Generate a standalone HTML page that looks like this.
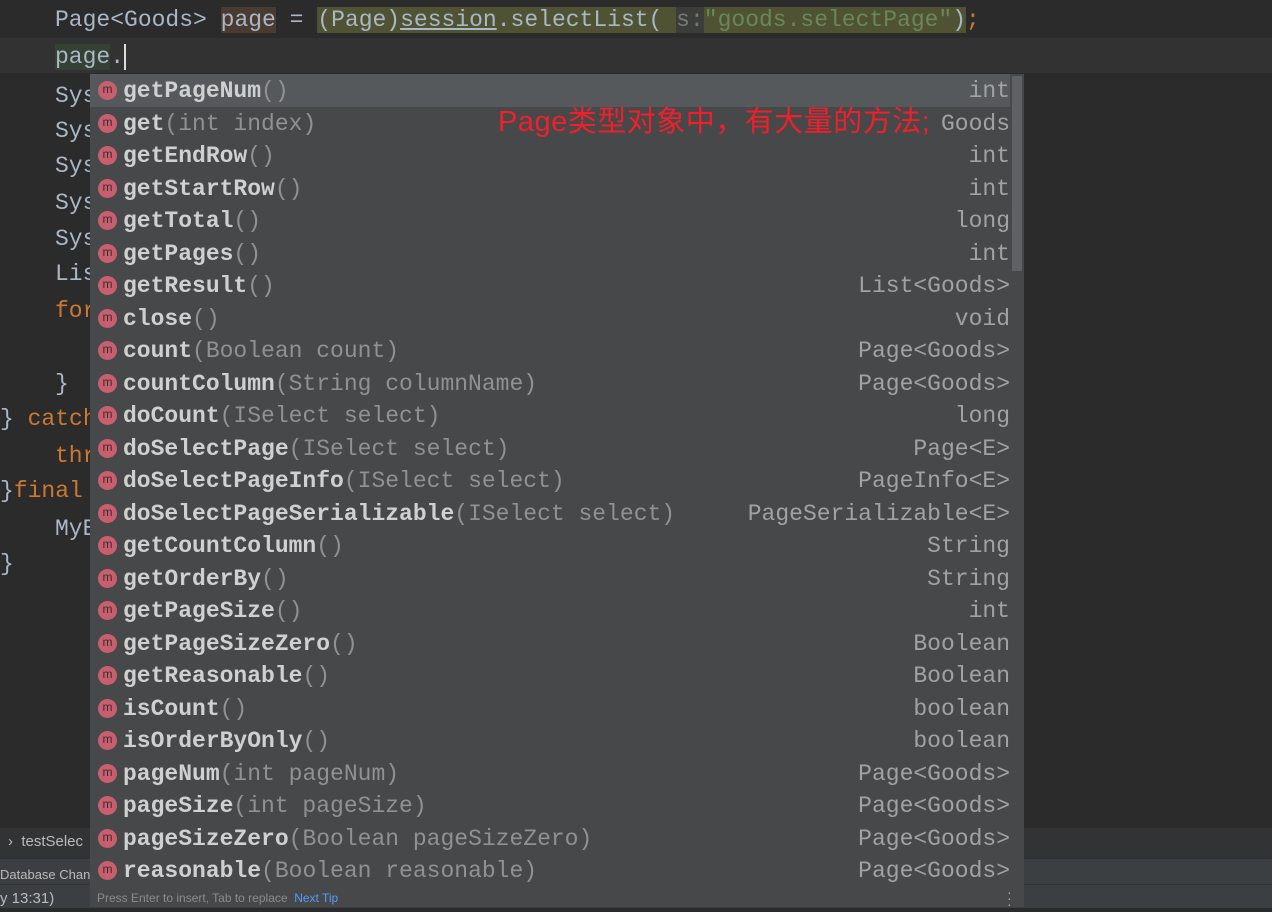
<!DOCTYPE html>
<html><head><meta charset="utf-8"><style>
body{margin:0;width:1272px;height:907px;background:#2b2b2b;overflow:hidden;position:relative;font-family:"Liberation Mono","DejaVu Sans Mono",monospace;font-size:23px;color:#a9b7c6}
.l{position:absolute;height:36px;line-height:36px;white-space:pre}
.cur{position:absolute;left:0;top:38px;width:1272px;height:35px;background:#323232}
.k{color:#cc7832}
.pop{position:absolute;left:90px;top:74px;width:934px;height:833px;background:#46484a}
.r{position:absolute;left:0;width:920px;height:32.5px;line-height:34px;white-space:pre}
.r .ic{position:absolute;left:8px;top:7px;width:19px;height:19px;border-radius:50%;background:#c75f6f;color:#3c2a2e;font:12px "Liberation Sans",sans-serif;line-height:17px;text-align:center}
.r .n{position:absolute;left:33px;color:#d0d0d0;font-weight:bold}
.r .n span{font-weight:normal;color:#8f9193}
.r .t{position:absolute;right:0;color:#a0a2a4}
.sel{background:#55595c}
</style></head><body>
<div class="cur"></div>
<div class="l" style="left:55px;top:2px">Page&lt;Goods&gt; <span style="background:#4a3b30">page</span> = <span style="background:#4f5233">(Page)<u>session</u>.selectList( <span style="color:#777;background:#3b3d3a">s:</span><span style="color:#6a8759">"goods.selectPage"</span>)</span><span class="k">;</span></div>
<div class="l" style="left:55px;top:39px"><span style="background:#344134">page</span>.<span style="border-left:2px solid #ddd"></span></div>
<div class="l" style="left:55px;top:78px">Sys</div>
<div class="l" style="left:55px;top:113px">Sys</div>
<div class="l" style="left:55px;top:148px">Sys</div>
<div class="l" style="left:55px;top:185px">Sys</div>
<div class="l" style="left:55px;top:221px">Sys</div>
<div class="l" style="left:55px;top:256px">Lis</div>
<div class="l k" style="left:55px;top:293px">for</div>
<div class="l" style="left:55px;top:366px">}</div>
<div class="l" style="left:0;top:401px">} <span class="k">catch</span></div>
<div class="l k" style="left:55px;top:438px">thr</div>
<div class="l" style="left:0;top:473px">}<span class="k">final</span></div>
<div class="l" style="left:55px;top:511px">MyB</div>
<div class="l" style="left:0;top:546px">}</div>
<div style="position:absolute;left:0;top:828px;width:1272px;height:30px;background:#313335"></div>
<div style="position:absolute;left:0;top:858px;width:1272px;height:49px;background:#3c3f41;border-top:1px solid #2f3133"></div>
<div style="position:absolute;left:0;top:884px;width:1272px;height:1px;background:#323436"></div>
<div style="position:absolute;left:8px;top:833px;font:15px 'Liberation Sans',sans-serif;color:#bbb">›&nbsp; testSelec</div>
<div style="position:absolute;left:0;top:867px;font:13px 'Liberation Sans',sans-serif;color:#bbb">Database Chan</div>
<div style="position:absolute;left:0;top:890px;font:15px 'Liberation Sans',sans-serif;color:#bbb">y 13:31)</div>
<div class="pop">
<div style="position:absolute;left:922px;top:2px;width:10px;height:195px;background:#5f6265"></div>
<div class="r sel" style="top:0"><i class="ic">m</i><b class="n">getPageNum<span>()</span></b><span class="t">int</span></div>
<div class="r" style="top:32.5px"><i class="ic">m</i><b class="n">get<span>(int index)</span></b><span class="t">Goods</span><span style="position:absolute;left:408px;top:-2px;color:#f0202a;font:29px 'Liberation Sans','Noto Sans CJK SC',sans-serif;line-height:34px;letter-spacing:0.5px">Page类型对象中，有大量的方法;</span></div>
<div class="r" style="top:65px"><i class="ic">m</i><b class="n">getEndRow<span>()</span></b><span class="t">int</span></div>
<div class="r" style="top:97.5px"><i class="ic">m</i><b class="n">getStartRow<span>()</span></b><span class="t">int</span></div>
<div class="r" style="top:130px"><i class="ic">m</i><b class="n">getTotal<span>()</span></b><span class="t">long</span></div>
<div class="r" style="top:162.5px"><i class="ic">m</i><b class="n">getPages<span>()</span></b><span class="t">int</span></div>
<div class="r" style="top:195px"><i class="ic">m</i><b class="n">getResult<span>()</span></b><span class="t">List&lt;Goods&gt;</span></div>
<div class="r" style="top:227.5px"><i class="ic">m</i><b class="n">close<span>()</span></b><span class="t">void</span></div>
<div class="r" style="top:260px"><i class="ic">m</i><b class="n">count<span>(Boolean count)</span></b><span class="t">Page&lt;Goods&gt;</span></div>
<div class="r" style="top:292.5px"><i class="ic">m</i><b class="n">countColumn<span>(String columnName)</span></b><span class="t">Page&lt;Goods&gt;</span></div>
<div class="r" style="top:325px"><i class="ic">m</i><b class="n">doCount<span>(ISelect select)</span></b><span class="t">long</span></div>
<div class="r" style="top:357.5px"><i class="ic">m</i><b class="n">doSelectPage<span>(ISelect select)</span></b><span class="t">Page&lt;E&gt;</span></div>
<div class="r" style="top:390px"><i class="ic">m</i><b class="n">doSelectPageInfo<span>(ISelect select)</span></b><span class="t">PageInfo&lt;E&gt;</span></div>
<div class="r" style="top:422.5px"><i class="ic">m</i><b class="n">doSelectPageSerializable<span>(ISelect select)</span></b><span class="t">PageSerializable&lt;E&gt;</span></div>
<div class="r" style="top:455px"><i class="ic">m</i><b class="n">getCountColumn<span>()</span></b><span class="t">String</span></div>
<div class="r" style="top:487.5px"><i class="ic">m</i><b class="n">getOrderBy<span>()</span></b><span class="t">String</span></div>
<div class="r" style="top:520px"><i class="ic">m</i><b class="n">getPageSize<span>()</span></b><span class="t">int</span></div>
<div class="r" style="top:552.5px"><i class="ic">m</i><b class="n">getPageSizeZero<span>()</span></b><span class="t">Boolean</span></div>
<div class="r" style="top:585px"><i class="ic">m</i><b class="n">getReasonable<span>()</span></b><span class="t">Boolean</span></div>
<div class="r" style="top:617.5px"><i class="ic">m</i><b class="n">isCount<span>()</span></b><span class="t">boolean</span></div>
<div class="r" style="top:650px"><i class="ic">m</i><b class="n">isOrderByOnly<span>()</span></b><span class="t">boolean</span></div>
<div class="r" style="top:682.5px"><i class="ic">m</i><b class="n">pageNum<span>(int pageNum)</span></b><span class="t">Page&lt;Goods&gt;</span></div>
<div class="r" style="top:715px"><i class="ic">m</i><b class="n">pageSize<span>(int pageSize)</span></b><span class="t">Page&lt;Goods&gt;</span></div>
<div class="r" style="top:747.5px"><i class="ic">m</i><b class="n">pageSizeZero<span>(Boolean pageSizeZero)</span></b><span class="t">Page&lt;Goods&gt;</span></div>
<div class="r" style="top:780px"><i class="ic">m</i><b class="n">reasonable<span>(Boolean reasonable)</span></b><span class="t">Page&lt;Goods&gt;</span></div>
<div style="position:absolute;left:7px;top:817px;font:12px 'Liberation Sans',sans-serif;color:#8a8c8e">Press Enter to insert, Tab to replace &nbsp;<span style="color:#589df6">Next Tip</span></div>
<div style="position:absolute;left:917px;top:815px;color:#aaa;font:14px 'Liberation Sans',sans-serif;line-height:6px">·<br>·<br>·</div>
</div>
</body></html>
